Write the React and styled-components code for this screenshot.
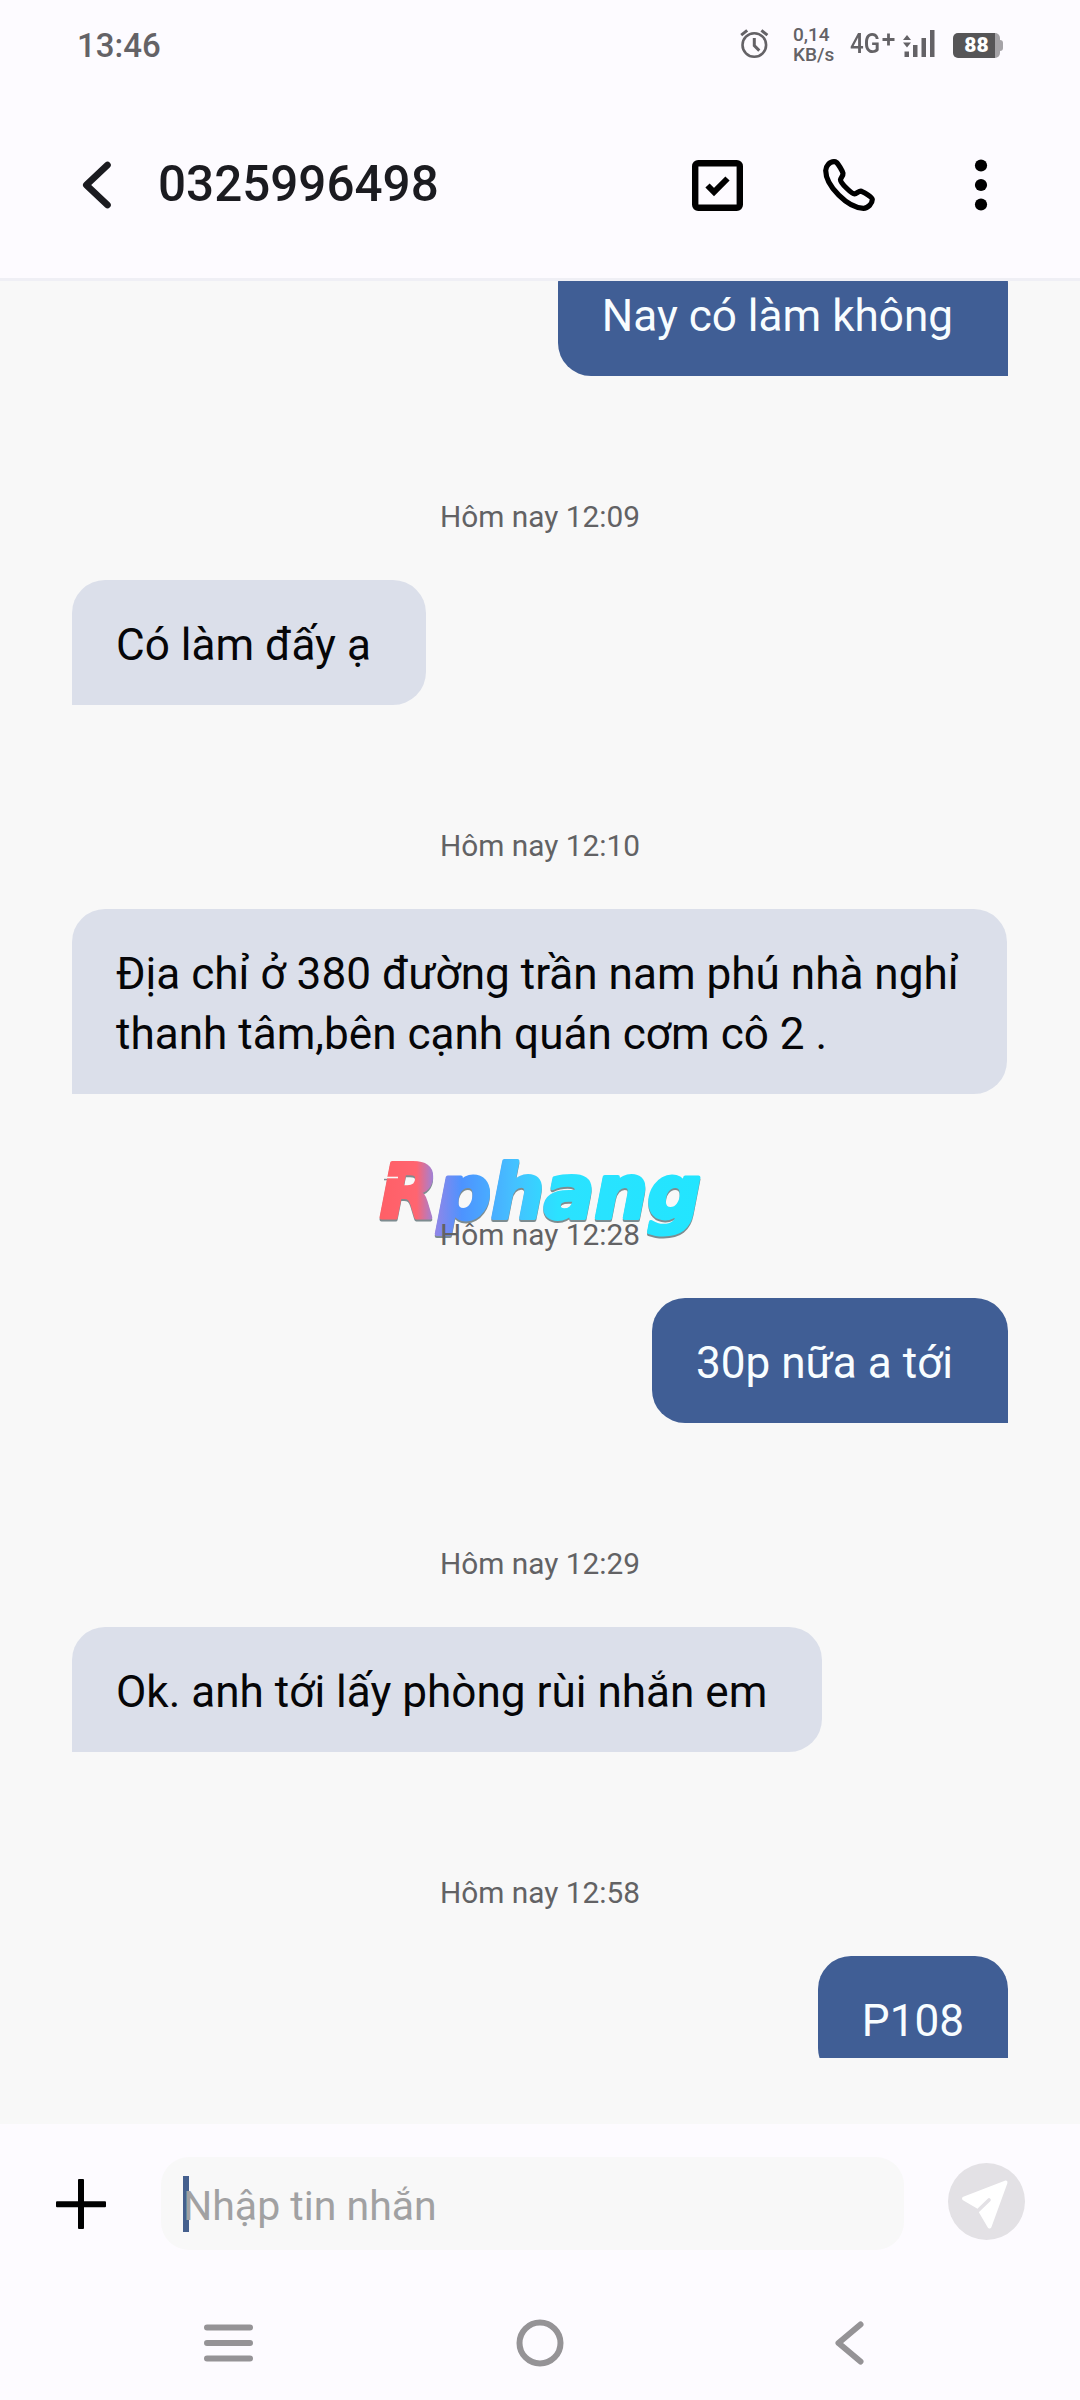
import React from 'react'
import styled, { createGlobalStyle, css } from 'styled-components';

const GlobalStyle = createGlobalStyle`
  * {
    box-sizing: border-box;
  }

  body {
    margin: 0;
    background: #fdfbff;
    font-family: Roboto, "Noto Sans", sans-serif;
  }

  svg {
    display: block;
    flex: none;
  }
`;

const Screen = styled.div`
  display: flex;
  flex-direction: column;
  width: 1080px;
  height: 2400px;
  overflow: hidden;
  background: #fdfbff;
`;

const StatusBar = styled.div`
  display: flex;
  align-items: flex-start;
  height: 90px;
  padding: 0 77px;
  color: #646266;
`;

const Clock = styled.div`
  margin-top: 26px;
  font-size: 33px;
  line-height: 39px;
  font-weight: 500;
`;

const StatusIcons = styled.div`
  display: flex;
  align-items: flex-start;
  height: 90px;
  margin-left: auto;
  padding-top: 28px;
`;

const Speed = styled.div`
  width: 57px;
  margin: -3px 0 0 24px;
  font-size: 19px;
  line-height: 20px;
  font-weight: 500;
`;

const Network = styled.div`
  width: 32px;
  font-size: 28px;
  line-height: 32px;
  font-weight: 500;
  transform: scaleX(0.86);
  transform-origin: left;
`;

const Signal = styled.div`
  margin-left: 8px;
`;

const Battery = styled.div`
  display: flex;
  align-items: center;
  margin: 5px 0 0 18px;
`;

const BatteryLevel = styled.div`
  display: flex;
  align-items: center;
  justify-content: center;
  width: 47px;
  height: 25px;
  border-radius: 5px;
  background: linear-gradient(to right, #565557 42px, #a5a3a7 42px);
  color: #fff;
  font-size: 21px;
  line-height: 25px;
  font-weight: 900;
`;

const BatteryTip = styled.div`
  width: 3px;
  height: 11px;
  border-radius: 0 3px 3px 0;
  background: #a5a3a7;
`;

const Header = styled.header`
  display: flex;
  align-items: center;
  height: 191px;
  padding: 2px 92px 0 82px;
  border-bottom: 3px solid #efeff5;
`;

const Title = styled.h1`
  flex: 1;
  margin: 0 0 2px 44px;
  color: #1b1b20;
  font-size: 49.4px;
  line-height: 60px;
  font-weight: 500;
`;

const Actions = styled.div`
  display: flex;
  align-items: center;
  gap: 80px;
`;

const MoreButton = styled.div`
  margin-left: 19px;
`;

const Conversation = styled.main`
  height: 1843px;
  padding-bottom: 66px;
  background: #f8f8f8;
`;

const Viewport = styled.div`
  display: flex;
  flex-direction: column;
  justify-content: flex-start;
  height: 1777px;
  padding: 0 72px;
  overflow: hidden;
`;

const Bubble = styled.div`
  flex: none;
  align-self: flex-start;
  max-width: 935px;
  padding: 35px 44px 30px;
  border-radius: 33px 33px 33px 0;
  background: #dbdfea;
  color: #060608;
  font-size: 44.1px;
  line-height: 60px;
  white-space: pre;

  ${props => props.$sent && css`
    align-self: flex-end;
    border-radius: 33px 33px 0 33px;
    background: #405e95;
    color: #f8fdff;
  `}

  ${props => props.$first && css`
    margin-top: -30px;
  `}
`;

const TimeRow = styled.div`
  position: relative;
  flex: none;
  height: 204px;
  padding-top: 123px;
  color: #626264;
  font-size: 29.8px;
  line-height: 36px;
  text-align: center;
`;

const TimeText = styled.span`
  position: relative;
`;

const Watermark = styled.svg`
  position: absolute;
  top: 46px;
  left: 298px;
  overflow: visible;
  filter: drop-shadow(0 2px 0.5px #7d8c90);
`;

const Composer = styled.div`
  display: flex;
  align-items: center;
  height: 159px;
  padding: 0 55px 0 56px;
`;

const Field = styled.div`
  display: flex;
  align-items: center;
  width: 743px;
  height: 93px;
  margin: 0 44px 0 55px;
  padding-left: 22px;
  border-radius: 28px;
  background: #f8f8f8;
`;

const Caret = styled.span`
  width: 6px;
  height: 56px;
  margin-right: -6px;
  background: #45608e;
`;

const Placeholder = styled.span`
  padding-top: 4px;
  color: #a1a1a2;
  font-size: 41px;
  line-height: 48px;
`;

const SendButton = styled.div`
  margin-top: -5px;
`;

const NavBar = styled.nav`
  display: flex;
  align-items: center;
  justify-content: space-between;
  height: 117px;
  padding: 3px 216px 0 204px;
`;

const HomeButton = styled.div`
  margin-right: 8px;
`;

const messages = [
  { text: 'Nay có làm không ', sent: true },
  { time: 'Hôm nay 12:09', text: 'Có làm đấy ạ ' },
  { time: 'Hôm nay 12:10', text: 'Địa chỉ ở 380 đường trần nam phú nhà nghỉ \nthanh tâm,bên cạnh quán cơm cô 2 .' },
  { time: 'Hôm nay 12:28', text: '30p nữa a tới ', sent: true, watermark: true },
  { time: 'Hôm nay 12:29', text: 'Ok. anh tới lấy phòng rùi nhắn em ' },
  { time: 'Hôm nay 12:58', text: 'P108', sent: true },
];

const AlarmIcon = () => (
  <svg width="29" height="31" viewBox="0 0 29 31" fill="none" stroke="#646266" strokeWidth="2.6">
    <circle cx="14.3" cy="17" r="11.8" />
    <path d="M14.3 10v7.6l5 5" strokeWidth="3" />
    <path d="M1.2 7.2l6-4.8M27.4 7.2l-6-4.8" strokeWidth="3" />
  </svg>
);

const PlusIcon = () => (
  <svg width="13" height="30" viewBox="0 0 13 30" stroke="#646266" strokeWidth="2.8">
    <path d="M.5 11.5h12M6.5 5.5v12" />
  </svg>
);

const SignalIcon = () => (
  <svg width="32" height="29" viewBox="0 0 32 29" fill="#646266">
    <path d="M0 12l4-5 4 5zM0 14.5h8l-4 5z" />
    <rect x="1.5" y="23.5" width="4.5" height="5.5" />
    <rect x="10" y="17" width="4.5" height="12" />
    <rect x="18.5" y="10" width="4.5" height="19" />
    <rect x="27" y="2" width="4.5" height="27" />
  </svg>
);

const BackIcon = () => (
  <svg width="32" height="48" viewBox="0 0 32 48" fill="none" stroke="#1b1b20" strokeWidth="6.6" strokeLinecap="round" strokeLinejoin="round">
    <path d="M25.5 4L4.3 24l21.2 20" />
  </svg>
);

const CheckIcon = () => (
  <svg width="51" height="51" viewBox="0 0 51 51" fill="none" stroke="#000">
    <rect x="3.2" y="3.2" width="44.6" height="44.6" rx="3" strokeWidth="6.4" />
    <path d="M15.5 25.5l6.5 6.5 13.5-13.5" strokeWidth="6" />
  </svg>
);

const PhoneIcon = () => (
  <svg width="52" height="52" viewBox="0 0 52 52" fill="none" stroke="#000" strokeWidth="5.2" strokeLinejoin="round">
    <path d="M11 2.7C6.5 2.7 2.7 7 2.7 11.5 2.7 27 25 49.3 40.5 49.3c4.5 0 8.8-4.8 8.8-8.8 0-2.5-7.3-6.7-10.8-8.2-2.5-.8-4.5 2.2-7 2.5-3 0-14-10.8-14-14.1.3-2.2 2.8-3.7 2.5-6.4C19.5 12 15 4.5 13.5 3.5c-1-.8-1.8-.8-2.5-.8z" />
  </svg>
);

const MoreIcon = () => (
  <svg width="14" height="52" viewBox="0 0 14 52">
    <circle cx="7" cy="6.5" r="6.1" />
    <circle cx="7" cy="26" r="6.1" />
    <circle cx="7" cy="45.5" r="6.1" />
  </svg>
);

const AddIcon = () => (
  <svg width="50" height="50" viewBox="0 0 50 50">
    <rect x="0" y="22.2" width="50" height="6" rx="1" />
    <rect x="22" y="0" width="6" height="50" rx="1" />
  </svg>
);

const SendIcon = () => (
  <svg width="77" height="77" viewBox="0 0 77 77">
    <circle cx="38.5" cy="38.5" r="38.5" fill="#e3e1e5" />
    <path d="M57.5 19.5L16 35.5l14.5 8.5 2.5 5 8.5 14.5z" fill="#fff" stroke="#fff" strokeWidth="4" strokeLinejoin="round" />
    <path d="M28 49.5L41 37" stroke="#e3e1e5" strokeWidth="3.6" strokeLinecap="round" />
  </svg>
);

const Logo = () => (
  <Watermark width="338" height="110" viewBox="0 0 338 110">
    <defs>
      <linearGradient id="logo" gradientUnits="userSpaceOnUse" x1="8" y1="0" x2="330" y2="0">
        <stop offset="0" stopColor="#ff5f66" />
        <stop offset="0.12" stopColor="#ff6570" />
        <stop offset="0.18" stopColor="#8f86e8" />
        <stop offset="0.26" stopColor="#4d93ff" />
        <stop offset="0.42" stopColor="#45c0ff" />
        <stop offset="0.56" stopColor="#2be2ff" />
        <stop offset="1" stopColor="#22e5ff" />
      </linearGradient>
    </defs>
    <text
      x="10"
      y="78"
      textLength="321"
      lengthAdjust="spacingAndGlyphs"
      fontFamily="DejaVu Sans"
      fontSize="74"
      fontWeight="700"
      fontStyle="italic"
      fill="url(#logo)"
      stroke="url(#logo)"
      strokeWidth="4"
      strokeLinejoin="round"
    >Rphang</text>
    <path d="M14 37.5h14" stroke="#f8f8f8" strokeWidth="1.6" />
  </Watermark>
);

const Message = ({ time, text, sent, first, watermark }) => (
  <>
    {time && (
      <TimeRow>
        {watermark && <Logo />}
        <TimeText>{time}</TimeText>
      </TimeRow>
    )}
    <Bubble $sent={sent} $first={first}>{text}</Bubble>
  </>
);

const App = () => (
  <Screen>
    <GlobalStyle />
    <StatusBar>
      <Clock>13:46</Clock>
      <StatusIcons>
        <AlarmIcon />
        <Speed>0,14<br />KB/s</Speed>
        <Network>4G</Network>
        <PlusIcon />
        <Signal>
          <SignalIcon />
        </Signal>
        <Battery>
          <BatteryLevel>88</BatteryLevel>
          <BatteryTip />
        </Battery>
      </StatusIcons>
    </StatusBar>
    <Header>
      <BackIcon />
      <Title>0325996498</Title>
      <Actions>
        <CheckIcon />
        <PhoneIcon />
        <MoreButton>
          <MoreIcon />
        </MoreButton>
      </Actions>
    </Header>
    <Conversation>
      <Viewport>
        {messages.map((message, i) => (
          <Message key={i} first={i === 0} {...message} />
        ))}
      </Viewport>
    </Conversation>
    <Composer>
      <AddIcon />
      <Field>
        <Caret />
        <Placeholder>Nhập tin nhắn</Placeholder>
      </Field>
      <SendButton>
        <SendIcon />
      </SendButton>
    </Composer>
    <NavBar>
      <svg width="49" height="38" viewBox="0 0 49 38" stroke="#959396" strokeWidth="6" strokeLinecap="round">
        <path d="M3 3.5h43M3 19h43M3 34.5h43" />
      </svg>
      <HomeButton>
        <svg width="48" height="48" viewBox="0 0 48 48" fill="none" stroke="#959396" strokeWidth="6">
          <circle cx="24" cy="24" r="20.5" />
        </svg>
      </HomeButton>
      <svg width="29" height="44" viewBox="0 0 29 44" fill="none" stroke="#959396" strokeWidth="6" strokeLinecap="round" strokeLinejoin="round">
        <path d="M25.5 3.5L3.5 22l22 18.5" />
      </svg>
    </NavBar>
  </Screen>
);

export default App;
